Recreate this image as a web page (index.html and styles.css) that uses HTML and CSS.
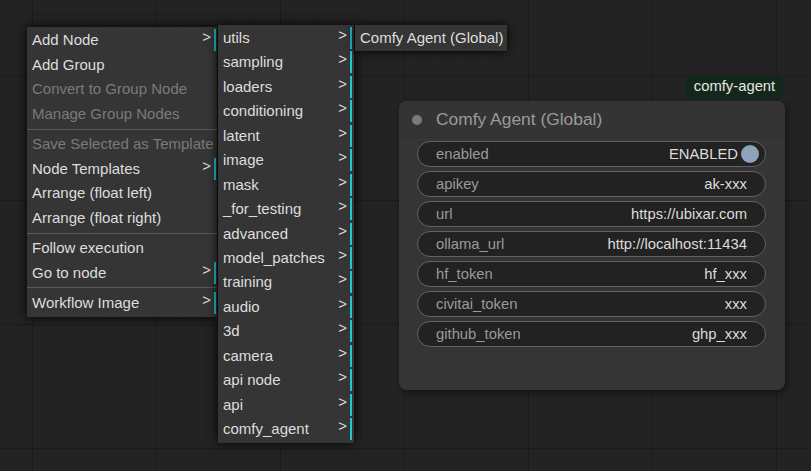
FILE: index.html
```html
<!DOCTYPE html>
<html>
<head>
<meta charset="utf-8">
<link rel="stylesheet" href="styles.css">
</head>
<body>
<div class="canvas">
  <div class="badge">comfy-agent</div>
  <div class="node">
    <div class="node-title">
      <span class="node-dot"></span>
      <span class="node-name">Comfy Agent (Global)</span>
    </div>
    <div class="widgets">
      <div class="widget"><span class="w-label">enabled</span><span class="w-value">ENABLED<span class="toggle-knob"></span></span></div>
      <div class="widget"><span class="w-label">apikey</span><span class="w-value">ak-xxx</span></div>
      <div class="widget"><span class="w-label">url</span><span class="w-value">https://ubixar.com</span></div>
      <div class="widget"><span class="w-label">ollama_url</span><span class="w-value">http://localhost:11434</span></div>
      <div class="widget"><span class="w-label">hf_token</span><span class="w-value">hf_xxx</span></div>
      <div class="widget"><span class="w-label">civitai_token</span><span class="w-value">xxx</span></div>
      <div class="widget"><span class="w-label">github_token</span><span class="w-value">ghp_xxx</span></div>
    </div>
  </div>

  <div class="menu main-menu">
    <div class="entry sub">Add Node</div>
    <div class="entry">Add Group</div>
    <div class="entry disabled">Convert to Group Node</div>
    <div class="entry disabled">Manage Group Nodes</div>
    <div class="separator"></div>
    <div class="entry disabled">Save Selected as Template</div>
    <div class="entry sub">Node Templates</div>
    <div class="entry">Arrange (float left)</div>
    <div class="entry">Arrange (float right)</div>
    <div class="separator"></div>
    <div class="entry">Follow execution</div>
    <div class="entry sub">Go to node</div>
    <div class="separator"></div>
    <div class="entry sub">Workflow Image</div>
  </div>

  <div class="menu cat-menu">
    <div class="entry sub">utils</div>
    <div class="entry sub">sampling</div>
    <div class="entry sub">loaders</div>
    <div class="entry sub">conditioning</div>
    <div class="entry sub">latent</div>
    <div class="entry sub">image</div>
    <div class="entry sub">mask</div>
    <div class="entry sub">_for_testing</div>
    <div class="entry sub">advanced</div>
    <div class="entry sub">model_patches</div>
    <div class="entry sub">training</div>
    <div class="entry sub">audio</div>
    <div class="entry sub">3d</div>
    <div class="entry sub">camera</div>
    <div class="entry sub">api node</div>
    <div class="entry sub">api</div>
    <div class="entry sub">comfy_agent</div>
  </div>

  <div class="menu leaf-menu">
    <div class="entry">Comfy Agent (Global)</div>
  </div>
</div>
</body>
</html>
```

FILE: styles.css
```css
* { box-sizing: border-box; }

html, body {
  margin: 0;
  padding: 0;
}

body {
  width: 811px;
  height: 471px;
  overflow: hidden;
  background: #232323;
  font-family: "Liberation Sans", Arial, sans-serif;
}

.canvas {
  position: relative;
  width: 811px;
  height: 471px;
  background-color: #232323;
  background-image:
    linear-gradient(to right, #1b1b1b 1px, transparent 1px),
    linear-gradient(to bottom, #1b1b1b 1px, transparent 1px),
    linear-gradient(to right, #212121 1px, transparent 1px),
    linear-gradient(to bottom, #212121 1px, transparent 1px);
  background-size: 124px 124px, 124px 124px, 12.4px 12.4px, 12.4px 12.4px;
  background-position: 32px 76px, 32px 76px, 32px 76px, 32px 76px;
}

/* ---------- context menus ---------- */
.menu {
  position: absolute;
  background: #353535;
  box-shadow: 0 0 10px #000;
  display: flex;
  flex-direction: column;
  gap: 2.44px;
  padding: 2px 0 3px 0;
  color: #dddddd;
  font-size: 15px;
}

.main-menu {
  left: 27px;
  top: 27px;
  width: 190px;
  gap: 2.67px;
}

.cat-menu {
  left: 218px;
  top: 25px;
  width: 136px;
}

.leaf-menu {
  left: 355px;
  top: 25px;
  width: 152px;
  padding: 2px 0 2px 0;
}

.entry {
  position: relative;
  height: 22px;
  line-height: 22px;
  padding-left: 5px;
  white-space: nowrap;
  margin-right: 1px;
}

.entry.disabled {
  color: #7a7a7a;
}

.entry.sub {
  border-right: 2px solid #1fc9cf;
}

.cat-menu .entry.sub {
  margin-right: 2px;
}

.entry.sub::after {
  content: ">";
  position: absolute;
  right: 3px;
  top: -3px;
  line-height: 22px;
}

.separator {
  height: 0;
  border-top: 1px solid #5a5a5a;
  margin: 0.9px 0 0.9px 0;
}

/* ---------- node ---------- */
.badge {
  position: absolute;
  left: 686px;
  top: 75px;
  width: 97px;
  height: 23px;
  line-height: 23px;
  text-align: center;
  background: #13281a;
  color: #e6e6e6;
  font-size: 14.8px;
  border-radius: 4px;
}

.node {
  position: absolute;
  left: 399px;
  top: 101px;
  width: 386px;
  height: 289px;
  background: #353535;
  border-radius: 8px;
  box-shadow: 2px 3px 6px rgba(0, 0, 0, 0.45);
}

.node-title {
  height: 37px;
  display: flex;
  align-items: center;
  padding-left: 13px;
  padding-top: 1px;
  gap: 14px;
  border-bottom: 1px solid #303030;
  border-radius: 8px 8px 0 0;
  background: #343434;
}

.node-dot {
  width: 10px;
  height: 10px;
  border-radius: 50%;
  background: #7a7a7a;
}

.node-name {
  color: #9a9a9a;
  font-size: 17.4px;
}

.widgets {
  display: flex;
  flex-direction: column;
  gap: 4px;
  padding: 3px 19px 0 18px;
}

.widget {
  height: 26px;
  border: 1px solid #626262;
  border-radius: 13px;
  background: #222222;
  display: flex;
  align-items: center;
  justify-content: space-between;
  padding: 0 18px 0 18px;
  font-size: 14.8px;
}

.w-label {
  color: #9a9a9a;
}

.w-value {
  color: #dcdcdc;
  display: flex;
  align-items: center;
}

.toggle-knob {
  width: 18px;
  height: 18px;
  border-radius: 50%;
  background: #8ea3b9;
  margin-left: 3px;
  margin-right: -12px;
}
```
